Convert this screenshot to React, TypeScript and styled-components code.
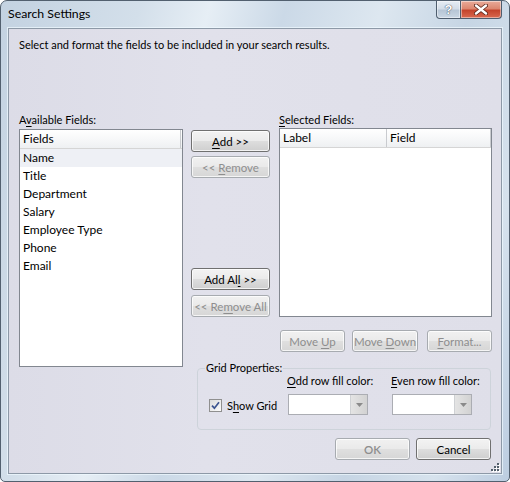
import styled, { createGlobalStyle } from "styled-components";

const UI_FONT = `"Segoe UI", Lato, "Noto Sans", sans-serif`;

const GlobalStyle = createGlobalStyle`
  html, body {
    margin: 0;
    padding: 0;
    background: #ffffff;
  }
  body {
    font-family: ${UI_FONT};
    font-size: 11px;
    color: #000;
  }
`;

const Window = styled.div`
  box-sizing: border-box;
  width: 510px;
  height: 482px;
  display: flex;
  flex-direction: column;
  border: 1px solid #52606f;
  border-radius: 7px 7px 5px 5px;
  overflow: hidden;
  white-space: nowrap;
  background: linear-gradient(
    105deg,
    #c3d2e1 0%,
    #d3dfea 22%,
    #e6eef5 33%,
    #cbd9e7 45%,
    #dde7f0 60%,
    #c6d5e4 74%,
    #d6e2ed 88%,
    #bccde0 100%
  );
`;

const TitleBar = styled.div`
  flex: none;
  height: 27px;
  display: flex;
  justify-content: space-between;
  align-items: flex-start;
  padding: 0 7px;
`;

const Title = styled.span`
  margin-top: 5px;
  line-height: 16px;
  font-size: 12.3px;
`;

const CaptionButtons = styled.div`
  display: flex;
`;

const CaptionButton = styled.div<{ $width: number; $close?: boolean }>`
  box-sizing: border-box;
  width: ${({ $width }) => $width}px;
  height: 18px;
  display: flex;
  align-items: center;
  justify-content: center;
  border: 1px solid #4e5d6e;
  border-top: none;
  border-radius: ${({ $close }) => ($close ? "0 0 4px 0" : "0 0 0 4px")};
  ${({ $close }) => ($close ? "border-left: none;" : "")}
  background: ${({ $close }) =>
    $close
      ? "linear-gradient(#e9ab9a 0%, #dc8770 45%, #c4442c 55%, #d9694f 100%)"
      : "linear-gradient(#e6edf4 0%, #d3dde8 45%, #b7c6d6 55%, #cad7e4 100%)"};
  box-shadow: inset 0 0 0 1px rgba(255, 255, 255, 0.45);
`;

const HelpGlyph = styled.span`
  font-family: "Liberation Sans", sans-serif;
  font-weight: bold;
  font-size: 13px;
  line-height: 13px;
  color: #ffffff;
  text-shadow: 0 0 1px #3d4b5c, 0 0 1px #3d4b5c;
`;

const Client = styled.div`
  position: relative;
  flex: 1;
  min-height: 0;
  margin: 0 7px 7px;
  box-sizing: border-box;
  border: 1px solid #8d99a7;
  box-shadow: 0 0 0 1px rgba(240, 250, 255, 0.7);
  background: linear-gradient(90deg, #dcdce7 0%, #e1e1eb 40%, #dfdfe9 100%);
  padding: 8px 9px 0 10px;
  display: flex;
  flex-direction: column;
`;

const Intro = styled.p`
  margin: 0;
  line-height: 16px;
`;

const FieldsGrid = styled.div`
  margin-top: 59px;
  display: grid;
  grid-template-columns: 164px 96px 213px;
  grid-template-rows: auto auto auto;
`;

const FieldLabel = styled.div`
  line-height: 16px;
  height: 16px;
`;

const Key = styled.span`
  text-decoration: underline;
  text-underline-offset: 2px;
`;

const ListBox = styled.div<{ $height: number; $offset?: number }>`
  box-sizing: border-box;
  height: ${({ $height }) => $height}px;
  margin-top: ${({ $offset }) => $offset ?? 0}px;
  border: 1px solid #828790;
  background: #ffffff;
  overflow: hidden;
  font-size: 12px;
`;

const LeftList = styled(ListBox)`
  grid-column: 1;
  grid-row: 2 / span 2;
`;

const ListHeader = styled.div`
  height: 18px;
  display: flex;
  background: linear-gradient(#ffffff 0%, #f7f8f9 50%, #eef0f2 100%);
  border-bottom: 1px solid #d5d5d5;
`;

const HeaderCell = styled.div<{ $width: number }>`
  box-sizing: border-box;
  width: ${({ $width }) => $width}px;
  flex: none;
  padding-left: 3px;
  line-height: 18px;
  border-right: 1px solid #c9cbcf;
`;

const ListItem = styled.div<{ $hot?: boolean }>`
  height: 18px;
  line-height: 18px;
  padding-left: 3px;
  background: ${({ $hot }) => ($hot ? "#eef0f5" : "transparent")};
`;

const MiddleColumn = styled.div`
  grid-column: 2;
  grid-row: 2;
  display: flex;
  flex-direction: column;
  padding-left: 8px;
`;

const RightColumn = styled.div`
  grid-column: 3;
  grid-row: 2;
  display: flex;
  flex-direction: column;
`;

const Button = styled.button<{ $width: number; $top?: number }>`
  box-sizing: border-box;
  width: ${({ $width }) => $width}px;
  height: 22px;
  margin: ${({ $top }) => $top ?? 0}px 0 0 0;
  padding: 0;
  border: 1px solid #707070;
  border-radius: 3px;
  font-family: ${UI_FONT};
  font-size: 11.5px;
  white-space: nowrap;
  color: #000;
  background: linear-gradient(#f3f3f3 0%, #ebebeb 48%, #dddddd 52%, #cfcfcf 100%);
  box-shadow: inset 0 0 0 1px rgba(255, 255, 255, 0.75);
  &:disabled {
    color: #8e8e8e;
    border-color: #a7abb0;
    background: linear-gradient(#f1f1f1 0%, #eaeaea 48%, #dfdfdf 52%, #d6d6d6 100%);
  }
`;

const MoveRow = styled.div`
  display: flex;
  margin-top: 13px;
  padding-left: 1px;
  gap: 7px;
`;

const GroupBox = styled.fieldset`
  grid-column: 2 / span 2;
  grid-row: 3;
  margin: 8px 1px 0 14px;
  min-width: 0;
  padding: 0 0 14px 11px;
  border: 1px solid #cdd3da;
  border-radius: 4px;
  display: grid;
  grid-template-columns: 78px 104px auto;
  align-items: center;
`;

const Legend = styled.legend`
  padding: 0 1px;
  margin-left: -4px;
  line-height: 16px;
`;

const SmallLabel = styled.div`
  line-height: 14px;
  margin-top: -2px;
  margin-bottom: 6px;
`;

const CheckRow = styled.label`
  display: flex;
  align-items: center;
  gap: 5px;
  margin-top: 1px;
`;

const CheckBox = styled.span`
  box-sizing: border-box;
  width: 13px;
  height: 13px;
  border: 1px solid #8f8f8f;
  background: linear-gradient(135deg, #dcdcdc, #fbfbfb);
  display: flex;
  align-items: center;
  justify-content: center;
`;

const Combo = styled.div`
  box-sizing: border-box;
  width: 80px;
  height: 21px;
  margin-left: 1px;
  border: 1px solid #abadb3;
  background: #ffffff;
  display: flex;
  justify-content: flex-end;
`;

const ComboArrow = styled.div`
  width: 16px;
  display: flex;
  align-items: center;
  justify-content: center;
  border-left: 1px solid #cfd1d4;
  background: linear-gradient(90deg, #e4e4e4, #d2d2d2);
`;

const Footer = styled.div`
  display: flex;
  justify-content: flex-end;
  gap: 6px;
  margin-top: 8px;
  padding-right: 1px;
`;

const Grip = styled.svg`
  position: absolute;
  right: 1px;
  bottom: 1px;
`;

const availableFields = [
  "Name",
  "Title",
  "Department",
  "Salary",
  "Employee Type",
  "Phone",
  "Email",
];

function DropArrow() {
  return (
    <ComboArrow>
      <svg width="7" height="4" viewBox="0 0 7 4">
        <path d="M0 0 L7 0 L3.5 4 Z" fill="#8a8a8a" />
      </svg>
    </ComboArrow>
  );
}

function App() {
  return (
    <>
      <GlobalStyle />
      <Window>
        <TitleBar>
          <Title>Search Settings</Title>
          <CaptionButtons>
            <CaptionButton $width={25}>
              <HelpGlyph>?</HelpGlyph>
            </CaptionButton>
            <CaptionButton $width={41} $close>
              <svg width="14" height="11" viewBox="0 0 14 11">
                <path d="M2 1.5 L12 9.5 M12 1.5 L2 9.5" stroke="#5a2418" strokeWidth="4" strokeLinecap="round" />
                <path d="M2 1.5 L12 9.5 M12 1.5 L2 9.5" stroke="#ffffff" strokeWidth="2.4" strokeLinecap="round" />
              </svg>
            </CaptionButton>
          </CaptionButtons>
        </TitleBar>
        <Client>
          <Intro>Select and format the fields to be included in your search results.</Intro>
          <FieldsGrid>
            <FieldLabel>
              A<Key>v</Key>ailable Fields:
            </FieldLabel>
            <div />
            <FieldLabel>
              <Key>S</Key>elected Fields:
            </FieldLabel>

            <LeftList $height={238} $offset={1}>
              <ListHeader>
                <HeaderCell $width={161}>Fields</HeaderCell>
              </ListHeader>
              {availableFields.map((f, i) => (
                <ListItem key={f} $hot={i === 0}>
                  {f}
                </ListItem>
              ))}
            </LeftList>

            <MiddleColumn>
              <Button $width={79} $top={2}>
                <Key>A</Key>dd &gt;&gt;
              </Button>
              <Button $width={79} $top={4} disabled>
                &lt;&lt; <Key>R</Key>emove
              </Button>
              <Button $width={79} $top={90}>
                Add Al<Key>l</Key> &gt;&gt;
              </Button>
              <Button $width={79} $top={5} disabled>
                &lt;&lt; Re<Key>m</Key>ove All
              </Button>
            </MiddleColumn>

            <RightColumn>
              <ListBox $height={189}>
                <ListHeader>
                  <HeaderCell $width={107}>Label</HeaderCell>
                  <HeaderCell $width={104}>Field</HeaderCell>
                </ListHeader>
              </ListBox>
              <MoveRow>
                <Button $width={65} disabled>
                  Move <Key>U</Key>p
                </Button>
                <Button $width={66} disabled>
                  Move <Key>D</Key>own
                </Button>
                <Button $width={65} disabled style={{ marginLeft: 2 }}>
                  <Key>F</Key>ormat...
                </Button>
              </MoveRow>
            </RightColumn>

            <GroupBox>
              <Legend>Grid Properties:</Legend>
              <div />
              <SmallLabel>
                <Key>O</Key>dd row fill color:
              </SmallLabel>
              <SmallLabel>
                <Key>E</Key>ven row fill color:
              </SmallLabel>
              <CheckRow>
                <CheckBox>
                  <svg width="9" height="9" viewBox="0 0 9 9">
                    <path d="M1 4.6 L3.4 7.2 L8 1.2" fill="none" stroke="#3d5590" strokeWidth="1.7" />
                  </svg>
                </CheckBox>
                <span>
                  S<Key>h</Key>ow Grid
                </span>
              </CheckRow>
              <Combo>
                <DropArrow />
              </Combo>
              <Combo>
                <DropArrow />
              </Combo>
            </GroupBox>
          </FieldsGrid>
          <Footer>
            <Button $width={75} disabled style={{ fontWeight: 600 }}>
              OK
            </Button>
            <Button $width={75}>Cancel</Button>
          </Footer>
          <Grip width="10" height="10" viewBox="0 0 10 10">
            {[
              [7, 1],
              [4, 4],
              [7, 4],
              [1, 7],
              [4, 7],
              [7, 7],
            ].map(([x, y]) => (
              <g key={`${x}-${y}`}>
                <rect x={x + 1} y={y + 1} width="2" height="2" fill="#ffffff" />
                <rect x={x} y={y} width="2" height="2" fill="#54606c" />
              </g>
            ))}
          </Grip>
        </Client>
      </Window>
    </>
  );
}

export default App;
